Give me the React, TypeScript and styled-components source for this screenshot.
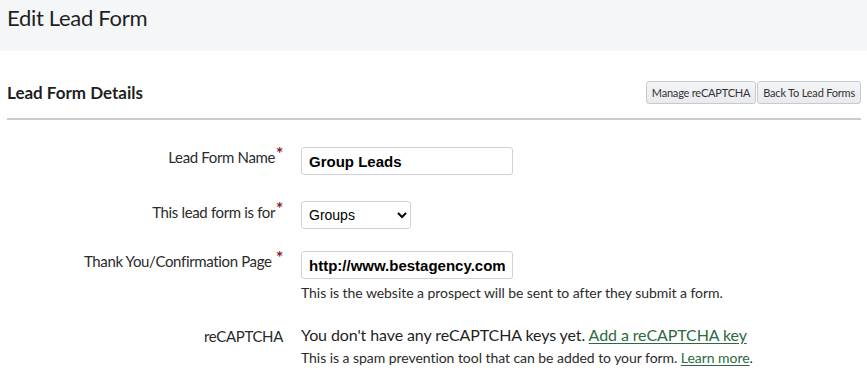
import styled, { createGlobalStyle } from "styled-components";

const GlobalStyle = createGlobalStyle`
  body {
    margin: 0;
    background: #fff;
    font-family: "Source Sans Pro", Lato, "Liberation Sans", sans-serif;
    color: #222;
  }
`;

const PageHeader = styled.header`
  height: 51px;
  box-sizing: border-box;
  background: #f5f6f8;
  padding: 4px 7px 0;
`;

const PageTitle = styled.h1`
  margin: 0;
  font-size: 22px;
  line-height: 28px;
  font-weight: 400;
  letter-spacing: -0.3px;
  color: #1f1f1f;
`;

const Section = styled.section`
  padding: 0 6px 0 7px;
`;

const SectionHeader = styled.div`
  height: 51px;
  margin-top: 16px;
  display: flex;
  align-items: center;
  justify-content: space-between;
  border-bottom: 2px solid #c9ccd1;
`;

const SectionTitle = styled.h2`
  margin: 0;
  font-size: 17px;
  font-weight: 700;
  color: #1f1f1f;
`;

const ButtonGroup = styled.div`
  display: flex;
  gap: 1px;
`;

const Button = styled.button`
  height: 23px;
  padding: 0 5px;
  border: 1px solid #c6cacf;
  border-radius: 3px;
  background: linear-gradient(#f4f5f7, #e8eaed);
  font-family: inherit;
  font-size: 11px;
  letter-spacing: -0.2px;
  color: #333;
  cursor: pointer;
`;

const Form = styled.div`
  padding-top: 27px;
`;

const Row = styled.div<{ $gap: number }>`
  display: grid;
  grid-template-columns: 276px 1fr;
  column-gap: 18px;
  align-items: start;
  margin-bottom: ${(p) => p.$gap}px;
`;

const Label = styled.label<{ $top: number }>`
  text-align: right;
  font-size: 15px;
  letter-spacing: -0.35px;
  color: #2b2b2b;
  padding-top: ${(p) => p.$top}px;
  white-space: nowrap;
`;

const Star = styled.span`
  color: #7d1d1d;
  font-weight: 700;
  font-size: 17px;
  line-height: 0;
  position: relative;
  top: -3px;
  margin-left: 1px;
`;

const Field = styled.div`
  display: flex;
  flex-direction: column;
  align-items: flex-start;
`;

const TextInput = styled.input`
  box-sizing: border-box;
  width: 212px;
  height: 28px;
  padding: 0 7px;
  border: 1px solid #cfd2d6;
  border-radius: 3px;
  font-family: "Liberation Sans", Arial, sans-serif;
  font-size: 15px;
  font-weight: 700;
  color: #000;
`;

const Select = styled.select`
  box-sizing: border-box;
  width: 110px;
  height: 28px;
  padding: 0 3px;
  border: 1px solid #cfd2d6;
  border-radius: 3px;
  background: #fff;
  font-family: "Liberation Sans", Arial, sans-serif;
  font-size: 14px;
  color: #000;
`;

const Help = styled.div`
  margin-top: 5px;
  font-size: 14px;
  letter-spacing: -0.05px;
  color: #2b2b2b;
`;

const Lead = styled.div`
  font-size: 16px;
  letter-spacing: -0.1px;
  color: #1f1f1f;
`;

const Link = styled.a`
  color: #2c6a3f;
  text-decoration: underline;
  text-underline-offset: 2px;
`;

export default function App() {
  return (
    <>
      <GlobalStyle />
      <PageHeader>
        <PageTitle>Edit Lead Form</PageTitle>
      </PageHeader>
      <Section>
        <SectionHeader>
          <SectionTitle>Lead Form Details</SectionTitle>
          <ButtonGroup>
            <Button>Manage reCAPTCHA</Button>
            <Button>Back To Lead Forms</Button>
          </ButtonGroup>
        </SectionHeader>
        <Form>
          <Row $gap={26}>
            <Label $top={1}>
              Lead Form Name<Star>*</Star>
            </Label>
            <Field>
              <TextInput defaultValue="Group Leads" />
            </Field>
          </Row>
          <Row $gap={22}>
            <Label $top={2}>
              This lead form is for<Star>*</Star>
            </Label>
            <Field>
              <Select defaultValue="Groups">
                <option>Groups</option>
                <option>Individuals</option>
              </Select>
            </Field>
          </Row>
          <Row $gap={24}>
            <Label $top={1}>
              Thank You/Confirmation Page <Star>*</Star>
            </Label>
            <Field>
              <TextInput defaultValue="http://www.bestagency.com" />
              <Help>This is the website a prospect will be sent to after they submit a form.</Help>
            </Field>
          </Row>
          <Row $gap={0}>
            <Label $top={2}>reCAPTCHA</Label>
            <Field>
              <Lead>
                You don't have any reCAPTCHA keys yet. <Link href="#">Add a reCAPTCHA key</Link>
              </Lead>
              <Help>
                This is a spam prevention tool that can be added to your form. <Link href="#">Learn more</Link>.
              </Help>
            </Field>
          </Row>
        </Form>
      </Section>
    </>
  );
}
